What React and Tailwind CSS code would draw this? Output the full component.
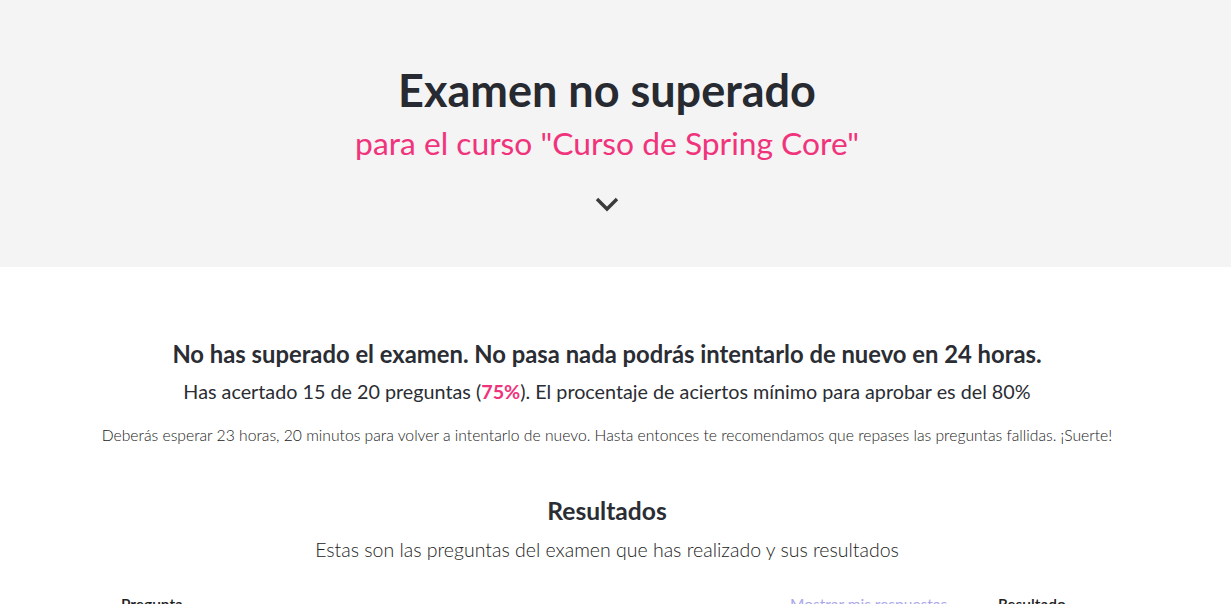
import React from "react";

function ChevronDown() {
  return (
    <svg width="24" height="16" viewBox="0 0 24 16" fill="none">
      <path d="M2 3l10 10 10-10" stroke="#3b3b3b" strokeWidth="3.4" />
    </svg>
  );
}

export default function App() {
  return (
    <div className="min-h-[604px] bg-white font-['Lato',sans-serif] text-[#2a2d33]">
      {/* header band */}
      <div className="bg-[#f4f4f4] h-[267px] pr-[17px] flex flex-col items-center pt-[62px]">
        <h1 className="text-[45px] font-bold leading-[56px] text-[#272a30]">Examen no superado</h1>
        <div className="text-[31.75px] leading-[40px] text-[#f0337b] mt-[5px]">
          para el curso "Curso de Spring Core"
        </div>
        <div className="mt-[33px] h-[16px]">
          <ChevronDown />
        </div>
      </div>

      <div className="pr-[17px] flex flex-col items-center text-center pt-[72px]">
        <h2 className="text-[23.8px] font-bold leading-[30px]">
          No has superado el examen. No pasa nada podrás intentarlo de nuevo en 24 horas.
        </h2>
        <p className="text-[19.75px] leading-[26px] mt-[10px]">
          Has acertado 15 de 20 preguntas (<span className="text-[#f0337b] font-bold">75%</span>). El procentaje de aciertos mínimo para aprobar es del 80%
        </p>
        <p className="text-[15.7px] font-light leading-[20px] mt-[20px] text-[#222]">
          Deberás esperar 23 horas, 20 minutos para volver a intentarlo de nuevo. Hasta entonces te recomendamos que repases las preguntas fallidas. ¡Suerte!
        </p>

        <h3 className="text-[24.6px] font-bold leading-[32px] mt-[50px]">Resultados</h3>
        <p className="text-[19.5px] font-light leading-[26px] mt-[10px] text-[#222]">
          Estas son las preguntas del examen que has realizado y sus resultados
        </p>
      </div>

      <div className="pr-[17px]">
        <div className="mx-auto w-[1000px] mt-[29px] flex items-center text-[15.5px] leading-[24px] pl-[14px]">
          <div className="font-semibold flex-1 text-[#222]">Pregunta</div>
          <div className="text-[#aaa8ea] w-[208px]">Mostrar mis respuestas</div>
          <div className="font-semibold w-[109px] text-[#222]">Resultado</div>
        </div>
      </div>
    </div>
  );
}
